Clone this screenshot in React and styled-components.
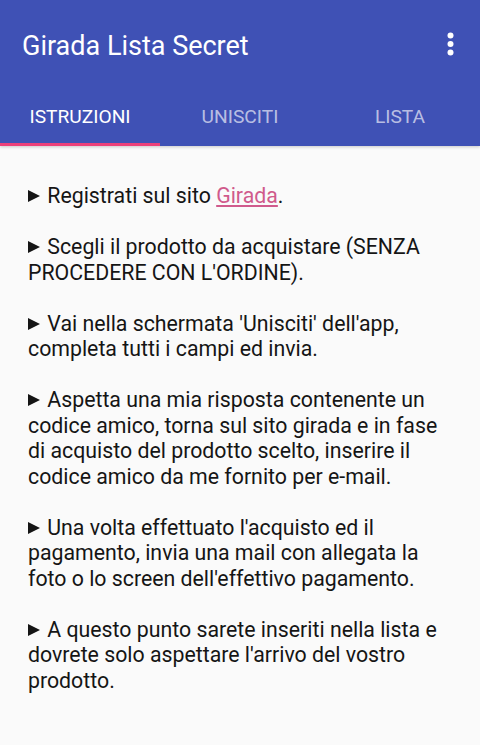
import React, { useState } from 'react'
import styled, { createGlobalStyle } from 'styled-components'

const GlobalStyle = createGlobalStyle`
  html, body { margin: 0; padding: 0; background: #fafafa; }
  body { font-family: Roboto, "Noto Sans", sans-serif; }
`

const tabs = ['ISTRUZIONI', 'UNISCITI', 'LISTA']

const App = () => {
  let [index, setIndex] = useState(0)

  const steps = [
    <>Registrati sul sito <LinkText href="#">Girada</LinkText>.</>,
    <>Scegli il prodotto da acquistare (SENZA PROCEDERE CON L'ORDINE).</>,
    <>Vai nella schermata 'Unisciti' dell'app, completa tutti i campi ed invia.</>,
    <>Aspetta una mia risposta contenente un codice amico, torna sul sito girada e in fase di acquisto del prodotto scelto, inserire il codice amico da me fornito per e-mail.</>,
    <>Una volta effettuato l'acquisto ed il pagamento, invia una mail con allegata la foto o lo screen dell'effettivo pagamento.</>,
    <>A questo punto sarete inseriti nella lista e dovrete solo aspettare l'arrivo del vostro prodotto.</>,
  ]

  return (
    <>
      <GlobalStyle />
      <Screen>
        <Header>
          <AppBar>
            <Title>Girada Lista Secret</Title>
            <MenuButton aria-label="menu">
              <svg width="7" height="24" viewBox="0 0 7 24">
                <circle cx="3.5" cy="3.5" r="3" fill="#fff" />
                <circle cx="3.5" cy="12" r="3" fill="#fff" />
                <circle cx="3.5" cy="20.5" r="3" fill="#fff" />
              </svg>
            </MenuButton>
          </AppBar>
          <TabRow>
            {tabs.map((name, idx) => (
              <Tab key={name} $active={idx === index} onClick={() => setIndex(idx)}>
                {name}
              </Tab>
            ))}
          </TabRow>
        </Header>
        <Content>
          {steps.map((s, i) => (
            <Step key={i}>
              <Arrow /> {s}
            </Step>
          ))}
        </Content>
      </Screen>
    </>
  )
}

const Screen = styled.div`
  width: 480px;
  min-height: 745px;
  background: #fafafa;
`

const Header = styled.header`
  background: #3f51b5;
  box-shadow: 0 1px 3px rgba(0, 0, 0, 0.2);
`

const AppBar = styled.div`
  height: 92px;
  display: flex;
  align-items: center;
  justify-content: space-between;
  padding: 0 26px 0 22px;
  box-sizing: border-box;
`

const Title = styled.h1`
  margin: 0;
  color: #fff;
  font-size: 27px;
  font-weight: 400;
`

const MenuButton = styled.div`
  display: flex;
  align-items: center;
  margin-top: -4px;
`

const TabRow = styled.nav`
  display: grid;
  grid-template-columns: 1fr 1fr 1fr;
  height: 54px;
`

const Tab = styled.div`
  display: flex;
  justify-content: center;
  align-items: center;
  font-size: 19.2px;
  color: ${(p) => (p.$active ? '#fff' : 'rgba(255,255,255,0.65)')};
  border-bottom: 3px solid ${(p) => (p.$active ? '#ec407a' : 'transparent')};
  padding-bottom: 3px;
  cursor: pointer;
`

const Content = styled.main`
  padding: 37px 0 0 28px;
  width: 416px;
`

const Step = styled.p`
  margin: 0 0 25.5px;
  font-size: 21.3px;
  line-height: 25.5px;
  color: #151515;
`

const Arrow = styled.span`
  display: inline-block;
  width: 0;
  height: 0;
  border-left: 12px solid #151515;
  border-top: 6.5px solid transparent;
  border-bottom: 6.5px solid transparent;
  margin-right: 2px;
  vertical-align: 1px;
`

const LinkText = styled.a`
  color: #d05a8c;
  text-decoration: underline;
`

export default App
